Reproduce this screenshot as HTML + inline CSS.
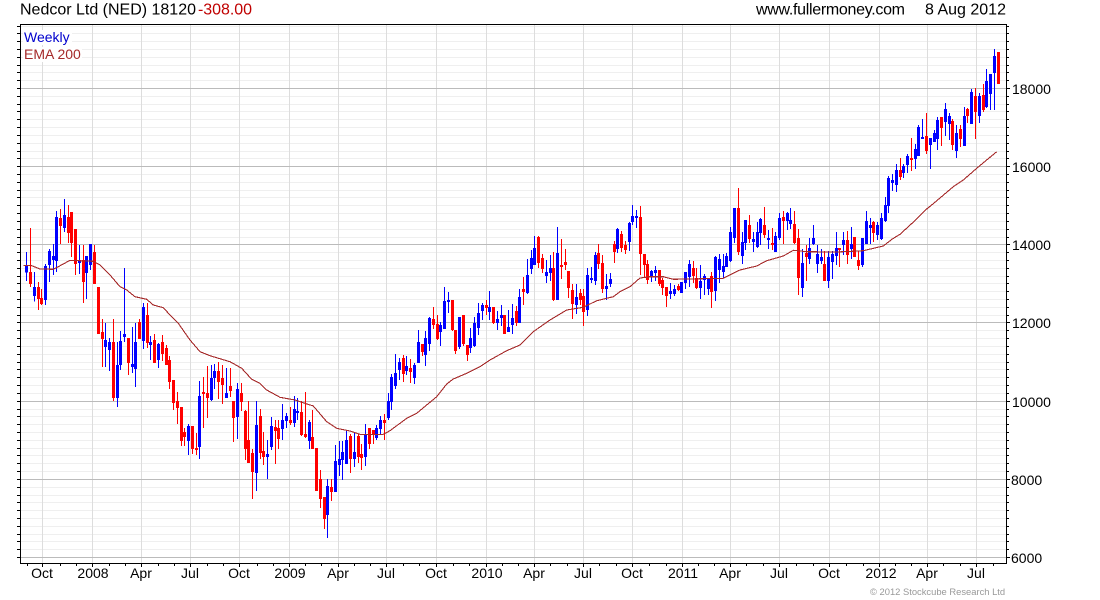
<!DOCTYPE html>
<html><head><meta charset="utf-8"><title>Nedcor Ltd (NED)</title>
<style>
html,body{margin:0;padding:0;background:#fff;width:1100px;height:600px;overflow:hidden}
svg{display:block;font-family:"Liberation Sans",Arial,sans-serif}
.c path{fill:none;shape-rendering:crispEdges}
.w{stroke-width:3}.b{stroke-width:9}
.r{stroke:#f00}.u{stroke:#00f}
</style></head><body>
<svg width="1100" height="600" viewBox="0 0 1100 600" xmlns="http://www.w3.org/2000/svg">
<rect width="1100" height="600" fill="#fff"/>
<g fill="none" stroke-width="1" shape-rendering="crispEdges">
<path stroke="#efefef" d="M20 26.5H1006M20 33.5H1006M20 41.5H1006M20 49.5H1006M20 57.5H1006M20 65.5H1006M20 72.5H1006M20 80.5H1006M20 96.5H1006M20 104.5H1006M20 111.5H1006M20 119.5H1006M20 127.5H1006M20 135.5H1006M20 143.5H1006M20 151.5H1006M20 158.5H1006M20 174.5H1006M20 182.5H1006M20 190.5H1006M20 197.5H1006M20 205.5H1006M20 213.5H1006M20 221.5H1006M20 229.5H1006M20 237.5H1006M20 252.5H1006M20 260.5H1006M20 268.5H1006M20 276.5H1006M20 283.5H1006M20 291.5H1006M20 299.5H1006M20 307.5H1006M20 315.5H1006M20 330.5H1006M20 338.5H1006M20 346.5H1006M20 354.5H1006M20 362.5H1006M20 369.5H1006M20 377.5H1006M20 385.5H1006M20 393.5H1006M20 409.5H1006M20 416.5H1006M20 424.5H1006M20 432.5H1006M20 440.5H1006M20 448.5H1006M20 455.5H1006M20 463.5H1006M20 471.5H1006M20 487.5H1006M20 495.5H1006M20 502.5H1006M20 510.5H1006M20 518.5H1006M20 526.5H1006M20 534.5H1006M20 541.5H1006M20 549.5H1006"/>
<path stroke="#ddd" d="M42.5 24V563M92.5 24V563M141.5 24V563M190.5 24V563M239.5 24V563M289.5 24V563M338.5 24V563M386.5 24V563M436.5 24V563M486.5 24V563M534.5 24V563M583.5 24V563M632.5 24V563M682.5 24V563M730.5 24V563M779.5 24V563M829.5 24V563M879.5 24V563M927.5 24V563M976.5 24V563"/>
<path stroke="#bbb" d="M20 88.5H1006M20 166.5H1006M20 244.5H1006M20 322.5H1006M20 401.5H1006M20 479.5H1006M20 557.5H1006"/>
</g>
<rect x="23" y="30" width="49" height="15" fill="#fff"/>
<rect x="23" y="47" width="59" height="15" fill="#fff"/>

<g class="c" transform="translate(10,190) scale(.333333)">
<path class="w r" d="M61 114V291M85 276V360M94 297V345M151 57V162M175 45V159M184 66V201M196 117V255M220 165V339M253 165V282M265 291V432M277 387V531M310 387V633M355 444V555M388 387V447M412 339V474M433 432V519M457 435V513M469 465V525M478 498V597"/>
<path class="b r" d="M61 246V282M85 291V327M94 324V342M151 84V108M175 81V129M184 66V159M196 117V222M220 210V276M253 186V282M265 291V432M277 426V447M310 456V624M355 444V519M388 396V447M412 375V459M433 450V519M457 456V492M469 474V525M478 510V576"/>
<path class="w u" d="M49 186V273M73 246V335M106 222V345M118 177V276M130 162V255M139 63V246M163 27V126M208 165V252M229 198V327M241 162V240M286 399V531M298 444V543M322 456V651M331 423V540M343 234V456M367 411V549M376 399V591M400 339V477M421 438V510M445 459V534"/>
<path class="b u" d="M49 227V248M73 291V318M106 228V330M118 183V225M130 198V210M139 81V213M163 75V114M208 213V219M229 198V249M241 162V225M286 450V471M298 456V480M322 525V624M331 453V525M343 432V441M367 522V531M376 456V537M400 351V453M421 456V465M445 462V510"/>
</g>

<g class="c" transform="translate(170,290) scale(.333333)">
<path class="w r" d="M10 270V360M22 306V402M34 351V468M43 414V468M67 408V492M79 429V495M100 261V414M112 228V384M145 216V327M157 225V342M181 234V321M190 333V456M214 279V363M226 360V510M235 333V519M247 477V627M271 357V507M280 426V525M316 390V522M325 390V477M361 351V405M394 333V438M406 306V444M427 360V477M439 474V603M451 540V654M463 621V717"/>
<path class="b r" d="M10 270V339M22 333V354M34 351V453M43 426V441M67 408V477M79 474V480M100 306V312M112 309V324M145 243V276M157 264V285M181 288V303M190 333V384M214 309V336M226 363V477M235 450V519M247 489V546M271 378V489M280 483V501M316 411V423M325 414V447M361 390V399M394 366V435M406 432V441M427 441V477M439 474V603M451 567V627M463 621V687"/>
<path class="w u" d="M55 402V495M88 273V507M124 225V333M133 222V297M169 234V324M202 279V447M259 333V603M292 450V567M304 381V480M337 342V450M349 369V414M373 318V411M382 324V390M418 390V477"/>
<path class="b u" d="M55 408V453M88 318V471M124 264V330M133 243V264M169 309V324M202 297V381M259 405V549M292 492V501M304 408V471M337 390V417M349 378V393M373 357V399M382 363V369M418 396V453"/>
</g>

<g class="c" transform="translate(300,280) scale(.333333)">
<path class="w r" d="M94 597V663M151 462V579M175 462V549M184 492V570M208 444V507M220 450V492M253 402V480M310 225V306M331 237V309M367 192V228M400 81V147M412 105V180M457 60V153M466 150V222M490 105V198M502 195V243"/>
<path class="b r" d="M94 621V636M151 468V537M175 468V531M184 522V534M208 444V492M220 450V465M253 420V429M310 234V282M331 264V276M367 192V216M400 117V135M412 132V177M457 60V150M466 150V213M490 105V192M502 195V225"/>
<path class="w u" d="M82 597V774M106 495V636M118 483V588M127 483V600M139 453V552M163 459V561M196 432V558M229 435V480M241 408V462M265 339V420M274 282V390M286 222V327M298 234V300M319 228V285M343 249V312M355 150V249M376 153V258M388 111V213M421 126V198M433 21V147M445 36V99M478 111V207M511 144V219M523 111V201"/>
<path class="b u" d="M82 618V705M106 543V636M118 537V555M127 516V540M139 480V552M163 516V537M196 465V531M229 444V474M241 420V447M265 363V414M274 291V366M286 279V318M298 246V270M319 258V273M343 255V294M355 186V249M376 174V225M388 114V192M421 135V156M433 63V147M445 60V66M478 111V201M511 174V204M523 129V198"/>
</g>

<g class="c" transform="translate(440,200) scale(.333333)">
<path class="w r" d="M139 300V345M160 321V372M193 345V402M229 318V378M250 231V315M295 108V204M307 162V219M340 156V303M364 117V237M376 147V210M385 213V294M397 252V357M421 267V315M430 267V378M475 132V207M487 165V279M523 123V189"/>
<path class="b r" d="M139 315V324M160 321V369M193 345V402M229 333V369M250 267V276M295 111V189M307 174V207M340 204V300M364 195V201M376 186V195M385 213V264M397 270V312M421 279V300M430 288V336M475 159V192M487 189V267M523 132V156"/>
<path class="w u" d="M115 309V405M127 309V360M148 273V360M172 333V390M184 315V378M205 330V396M217 312V402M238 267V369M262 177V282M274 150V222M283 108V195M319 180V249M331 165V243M352 81V300M409 252V342M442 204V348M454 201V249M466 156V255M499 222V300M511 219V261M532 84V159"/>
<path class="b u" d="M115 339V384M127 315V333M148 321V336M172 357V369M184 345V354M205 381V396M217 354V375M238 291V369M262 225V279M274 174V207M283 144V195M319 216V228M331 204V219M352 159V300M409 291V315M442 225V330M454 234V240M466 165V243M499 258V267M511 237V252M532 87V147"/>
</g>

<g class="c" transform="translate(600,180) scale(.333333)">
<path class="w r" d="M64 153V216M76 183V222M121 78V285M133 222V294M142 240V312M178 270V318M187 294V345M199 321V381M235 312V333M280 243V309M289 264V327M334 276V384M415 24V225M448 105V189M493 81V174M517 144V210"/>
<path class="b r" d="M64 162V204M76 195V210M121 111V222M133 222V255M142 252V300M178 270V312M187 300V324M199 321V348M235 318V330M280 264V288M289 294V324M334 288V336M415 84V216M448 135V177M493 135V165"/>
<path class="w u" d="M88 126V213M97 75V135M109 90V144M154 270V306M166 258V303M211 309V357M223 315V348M244 306V339M256 276V327M268 240V321M301 255V357M313 282V345M325 294V345M346 228V363M358 222V309M370 222V294M379 219V261M391 141V246M403 84V189M427 156V252M436 120V210M460 156V216M472 126V204M481 114V195M505 150V207"/>
<path class="b u" d="M88 129V186M97 108V126M109 108V114M154 273V288M166 270V279M211 333V342M223 327V342M244 306V339M256 276V309M268 252V291M301 303V324M313 288V300M325 297V327M346 231V333M358 237V270M370 258V276M379 228V261M391 156V243M403 84V174M427 186V228M436 120V189M460 177V186M472 156V201M481 117V159M505 174V180"/>
</g>

<g class="c" transform="translate(770,180) scale(.333333)">
<path class="w r" d="M7 144V210M40 93V192M73 93V192M85 147V345M109 195V303M163 213V303M208 204V261M232 153V252M253 171V225M265 213V270M310 123V186"/>
<path class="b r" d="M7 189V195M40 111V123M73 132V189M85 174V294M109 219V231M163 252V303M208 204V210M232 180V225M253 171V231M265 240V258M310 126V159"/>
<path class="w u" d="M16 156V216M28 99V180M52 96V150M61 84V147M97 207V351M118 174V252M130 135V195M142 195V279M154 207V252M175 213V324M187 213V297M199 156V255M220 156V225M244 141V237M277 174V261M289 93V192M301 114V192M322 126V180"/>
<path class="b u" d="M16 168V216M28 114V174M52 99V123M61 120V132M97 249V324M118 204V237M130 174V192M142 222V252M154 231V243M175 231V303M187 222V246M199 204V228M220 180V195M244 192V207M277 174V255M289 123V192M301 135V144M322 135V165"/>
</g>

<g class="c" transform="translate(880,0) scale(.333333)">
<path class="w r" d="M61 474V540M94 414V513M139 339V462M184 351V438M217 357V450M241 375V441M262 324V369M286 264V417M310 252V336M355 156V252"/>
<path class="b r" d="M61 510V531M94 474V480M139 408V453M184 351V384M217 363V435M241 387V417M262 327V348M286 288V336M310 285V330M355 156V252"/>
<path class="w u" d="M4 639V720M16 591V666M25 528V639M37 522V573M49 492V576M70 492V534M82 462V519M106 432V507M115 375V468M127 357V417M151 414V507M163 390V426M172 351V450M196 309V408M208 339V420M229 375V474M253 321V438M274 267V372M298 279V369M319 207V324M331 222V330M343 147V330"/>
<path class="b u" d="M4 654V717M16 615V663M25 534V618M37 540V549M49 510V555M70 498V519M82 468V495M106 447V477M115 381V468M127 411V417M151 414V435M163 399V426M172 360V417M196 327V366M208 348V372M229 399V453M253 348V438M274 276V372M298 288V348M319 243V321M331 222V282M343 168V219"/>
</g>

<polyline fill="none" stroke="#a52a2a" stroke-width="1.1" shape-rendering="crispEdges" points="23.3,265.3 31.7,265.7 40,269 53.3,269.3 63.3,264 70,260.3 93.3,261.3 100,265 110,275 120,286.7 126.7,290 135,296.7 146.7,299.3 153.3,305 163.3,307.7 170,315 178.3,323.3 190,340 200,351.7 210,355.7 230,361.7 241.7,368.3 251.7,379.3 260,383.3 266.7,390 280,397.3 295,400 300,401.7 313.3,406 326.7,421.7 336.7,428.3 350,431 360,434.3 383.3,434.3 390,430.7 406.7,418.3 416.7,413.3 426.7,405 436.7,396.7 446.7,384 453.3,379 466.7,373.3 480,366.7 490,360 506.7,350.7 520,345 533.3,331.7 550,320 566.7,310 583.3,307.3 596.7,300.7 613.3,296.7 620,291.7 630,286.7 640,278 650,276.7 663.3,276.7 673.3,279.3 723.3,278.3 740,270 756.7,266 766.7,260.7 783.3,256 793.3,250.3 806.7,251.7 836.7,252 863.3,250.7 883.3,246 892.3,239 900,234.3 916.7,219 926.7,209 931.7,205 953.3,186.7 963.3,180 976.7,168.3 996.7,151.7"/>

<g fill="none" stroke="#000" stroke-width="1" shape-rendering="crispEdges">
<rect x="20.5" y="24.5" width="986" height="539" stroke-width="1"/>
<path d="M17 26.5H20M17 33.5H20M17 41.5H20M17 49.5H20M17 57.5H20M17 65.5H20M17 72.5H20M17 80.5H20M17 88.5H20M17 96.5H20M17 104.5H20M17 111.5H20M17 119.5H20M17 127.5H20M17 135.5H20M17 143.5H20M17 151.5H20M17 158.5H20M17 166.5H20M17 174.5H20M17 182.5H20M17 190.5H20M17 197.5H20M17 205.5H20M17 213.5H20M17 221.5H20M17 229.5H20M17 237.5H20M17 244.5H20M17 252.5H20M17 260.5H20M17 268.5H20M17 276.5H20M17 283.5H20M17 291.5H20M17 299.5H20M17 307.5H20M17 315.5H20M17 322.5H20M17 330.5H20M17 338.5H20M17 346.5H20M17 354.5H20M17 362.5H20M17 369.5H20M17 377.5H20M17 385.5H20M17 393.5H20M17 401.5H20M17 409.5H20M17 416.5H20M17 424.5H20M17 432.5H20M17 440.5H20M17 448.5H20M17 455.5H20M17 463.5H20M17 471.5H20M17 479.5H20M17 487.5H20M17 495.5H20M17 502.5H20M17 510.5H20M17 518.5H20M17 526.5H20M17 534.5H20M17 541.5H20M17 549.5H20M17 557.5H20"/>
<path d="M1007 26.5H1009M1007 33.5H1009M1007 41.5H1009M1007 49.5H1009M1007 57.5H1009M1007 65.5H1009M1007 72.5H1009M1007 80.5H1009M1007 88.5H1010M1007 96.5H1009M1007 104.5H1009M1007 111.5H1009M1007 119.5H1009M1007 127.5H1009M1007 135.5H1009M1007 143.5H1009M1007 151.5H1009M1007 158.5H1009M1007 166.5H1010M1007 174.5H1009M1007 182.5H1009M1007 190.5H1009M1007 197.5H1009M1007 205.5H1009M1007 213.5H1009M1007 221.5H1009M1007 229.5H1009M1007 237.5H1009M1007 244.5H1010M1007 252.5H1009M1007 260.5H1009M1007 268.5H1009M1007 276.5H1009M1007 283.5H1009M1007 291.5H1009M1007 299.5H1009M1007 307.5H1009M1007 315.5H1009M1007 322.5H1010M1007 330.5H1009M1007 338.5H1009M1007 346.5H1009M1007 354.5H1009M1007 362.5H1009M1007 369.5H1009M1007 377.5H1009M1007 385.5H1009M1007 393.5H1009M1007 401.5H1010M1007 409.5H1009M1007 416.5H1009M1007 424.5H1009M1007 432.5H1009M1007 440.5H1009M1007 448.5H1009M1007 455.5H1009M1007 463.5H1009M1007 471.5H1009M1007 479.5H1010M1007 487.5H1009M1007 495.5H1009M1007 502.5H1009M1007 510.5H1009M1007 518.5H1009M1007 526.5H1009M1007 534.5H1009M1007 541.5H1009M1007 549.5H1009M1007 557.5H1010"/>
<path d="M27.5 564V566M42.5 564V567M60.5 564V566M76.5 564V566M92.5 564V567M109.5 564V566M125.5 564V566M141.5 564V567M158.5 564V566M174.5 564V566M190.5 564V567M207.5 564V566M223.5 564V566M239.5 564V567M257.5 564V566M273.5 564V566M289.5 564V567M305.5 564V566M321.5 564V566M338.5 564V567M354.5 564V566M370.5 564V566M386.5 564V567M403.5 564V566M419.5 564V566M436.5 564V567M453.5 564V566M469.5 564V566M486.5 564V567M502.5 564V566M518.5 564V566M534.5 564V567M550.5 564V566M567.5 564V566M583.5 564V567M599.5 564V566M616.5 564V566M632.5 564V567M649.5 564V566M666.5 564V566M682.5 564V567M698.5 564V566M714.5 564V566M730.5 564V567M746.5 564V566M763.5 564V566M779.5 564V567M796.5 564V566M813.5 564V566M829.5 564V567M846.5 564V566M863.5 564V566M879.5 564V567M895.5 564V566M911.5 564V566M927.5 564V567M943.5 564V566M960.5 564V566M976.5 564V567M993.5 564V566"/>
</g>

<g font-size="16" fill="#000">
<text x="20" y="14.5" textLength="176" lengthAdjust="spacing">Nedcor Ltd (NED) 18120</text>
<text x="198" y="14.5" fill="#c00000" textLength="54" lengthAdjust="spacing">-308.00</text>
<text x="756" y="14.5" textLength="149" lengthAdjust="spacing">www.fullermoney.com</text>
<text x="925" y="14.5">8 Aug 2012</text>
</g>
<text x="24" y="42" font-size="14" fill="#0000cd">Weekly</text>
<text x="24" y="59" font-size="14" fill="#a52a2a">EMA 200</text>

<g font-size="14" fill="#000">
<text x="1012" y="94">18000</text>
<text x="1012" y="172">16000</text>
<text x="1012" y="250">14000</text>
<text x="1012" y="328">12000</text>
<text x="1012" y="407">10000</text>
<text x="1011" y="485">8000</text>
<text x="1011" y="563">6000</text>
</g>
<g font-size="14" fill="#000" text-anchor="middle">
<text x="42" y="578">Oct</text><text x="93" y="578">2008</text><text x="141" y="578">Apr</text><text x="190" y="578">Jul</text><text x="239" y="578">Oct</text>
<text x="290" y="578">2009</text><text x="338" y="578">Apr</text><text x="386" y="578">Jul</text><text x="436" y="578">Oct</text>
<text x="487" y="578">2010</text><text x="534" y="578">Apr</text><text x="583" y="578">Jul</text><text x="632" y="578">Oct</text>
<text x="683" y="578">2011</text><text x="730" y="578">Apr</text><text x="779" y="578">Jul</text><text x="829" y="578">Oct</text>
<text x="881" y="578">2012</text><text x="927" y="578">Apr</text><text x="976" y="578">Jul</text>
</g>
<text x="870" y="595" font-size="9.4" fill="#999">© 2012 Stockcube Research Ltd</text>
</svg>
</body></html>
